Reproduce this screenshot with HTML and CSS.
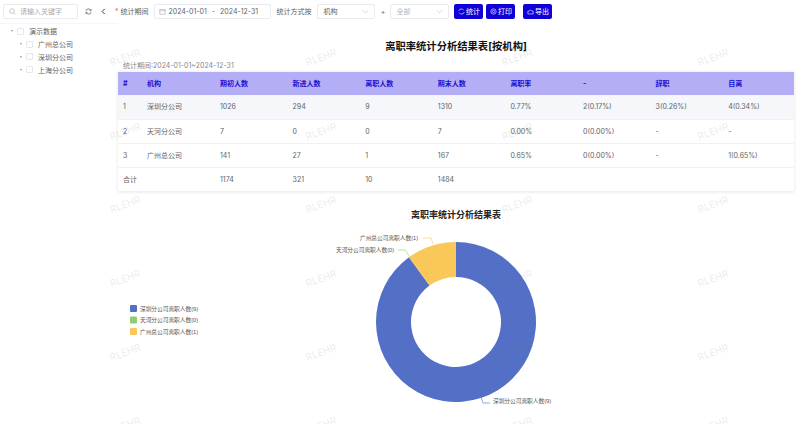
FILE: index.html
```html
<!DOCTYPE html>
<html lang="zh">
<head>
<meta charset="utf-8">
<title>离职率统计分析结果表</title>
<link rel="stylesheet" href="styles.css">
</head>
<body>
<div class="page">
  <div class="toolbar">
    <div class="search">
      <svg class="ico" viewBox="0 0 8 8"><circle cx="3.5" cy="3.5" r="2.7"/><path d="M5.5 5.5 7.3 7.3"/></svg>
      <span>请输入关键字</span>
    </div>
    <svg class="tool refresh" viewBox="0 0 8 8"><path d="M1 3.4A3 3 0 0 1 6.6 2.6M7 4.6A3 3 0 0 1 1.4 5.4"/><path d="M6.9 1.2V3H5.2M1.1 6.8V5H2.8"/></svg>
    <svg class="tool back" viewBox="0 0 8 8"><path d="M5.4 1 2.4 4l3 3"/></svg>
    <label class="lab first"><i>*</i> 统计期间</label>
    <div class="range">
      <svg class="ico" viewBox="0 0 8 8"><rect x="1" y="1.5" width="6" height="5.5"/><path d="M1 3.2h6"/></svg>
      <span>2024-01-01</span><span class="dash">-</span><span>2024-12-31</span>
    </div>
    <label class="lab method">统计方式按</label>
    <div class="select org"><span>机构</span><svg viewBox="0 0 8 8"><path d="M1 2.6 4 5.4l3-2.8"/></svg></div>
    <span class="plus">+</span>
    <div class="select all"><span>全部</span><svg viewBox="0 0 8 8"><path d="M1 2.6 4 5.4l3-2.8"/></svg></div>
    <button class="btn"><svg viewBox="0 0 8 8"><path d="M1 3.4A3 3 0 0 1 6.6 2.6M7 4.6A3 3 0 0 1 1.4 5.4"/></svg>统计</button>
    <button class="btn"><svg viewBox="0 0 8 8"><circle cx="4" cy="4" r="3"/><circle cx="4" cy="4" r="1.2"/></svg>打印</button>
    <button class="btn export"><svg viewBox="0 0 8 8"><path d="M1 6.8V3.6h1.4A1.7 1.7 0 0 1 5.6 3.6H7v3.2z"/></svg>导出</button>
  </div>
  <div class="body">
    <aside class="tree">
      <div class="node root"><b class="caret"></b><u class="check"></u>演示数据</div>
      <div class="node"><b class="caret"></b><u class="check"></u>广州总公司</div>
      <div class="node"><b class="caret"></b><u class="check"></u>深圳分公司</div>
      <div class="node"><b class="caret"></b><u class="check"></u>上海分公司</div>
    </aside>
    <main class="main">
      <h1 class="title">离职率统计分析结果表[按机构]</h1>
      <p class="period">统计期间:2024-01-01~2024-12-31</p>
      <table class="report">
        <colgroup><col class="c-no"><col class="c-org"><col class="c-n"><col class="c-n"><col class="c-n"><col class="c-n"><col class="c-n"><col class="c-n"><col class="c-n"><col></colgroup>
        <thead><tr><th>#</th><th>机构</th><th>期初人数</th><th>新进人数</th><th>离职人数</th><th>期末人数</th><th>离职率</th><th>-</th><th>辞职</th><th>自离</th></tr></thead>
        <tbody>
          <tr class="hl"><td>1</td><td>深圳分公司</td><td>1026</td><td>294</td><td>9</td><td>1310</td><td>0.77%</td><td>2(0.17%)</td><td>3(0.26%)</td><td>4(0.34%)</td></tr>
          <tr><td>2</td><td>天河分公司</td><td>7</td><td>0</td><td>0</td><td>7</td><td>0.00%</td><td>0(0.00%)</td><td>-</td><td>-</td></tr>
          <tr><td>3</td><td>广州总公司</td><td>141</td><td>27</td><td>1</td><td>167</td><td>0.65%</td><td>0(0.00%)</td><td>-</td><td>1(0.65%)</td></tr>
          <tr><td colspan="2">合计</td><td>1174</td><td>321</td><td>10</td><td>1484</td><td></td><td></td><td></td><td></td></tr>
        </tbody>
      </table>
      <svg class="chart" viewBox="0 0 682 233" width="682" height="233">
        <text class="chart-title" x="338" y="25.500" text-anchor="middle">离职率统计分析结果表</text>
        <g transform="translate(338 130)">
          <path fill="#5470c6" d="M0-80A80 80 0 1 1-47.02-64.72L-26.45-36.41A45 45 0 1 0 0-45Z"/>
          <path fill="#fac858" d="M-47.02-64.72A80 80 0 0 1 0-80L0-45A45 45 0 0 0-26.45-36.41Z"/>
        </g>
        <path class="lead y" d="M305 46h8l2 6"/>
        <path class="lead g" d="M280 58h7l5 7"/>
        <path class="lead b" d="M362 202l3 9h7"/>
        <text class="lbl" x="242" y="48">广州总公司离职人数(1)</text>
        <text class="lbl" x="218" y="60">天河分公司离职人数(0)</text>
        <text class="lbl" x="375" y="211">深圳分公司离职人数(9)</text>
        <rect x="12" y="113" width="7" height="7" rx="1" fill="#5470c6"/>
        <rect x="12" y="124.500" width="7" height="7" rx="1" fill="#91cc75"/>
        <rect x="12" y="136" width="7" height="7" rx="1" fill="#fac858"/>
        <text class="lbl" x="22" y="118.500">深圳分公司离职人数(9)</text>
        <text class="lbl" x="22" y="130">天河分公司离职人数(0)</text>
        <text class="lbl" x="22" y="141.500">广州总公司离职人数(1)</text>
      </svg>
    </main>
  </div>
  <div class="marks">
    <span>RLEHR</span><span>RLEHR</span><span>RLEHR</span><span>RLEHR</span>
    <span>RLEHR</span><span>RLEHR</span><span>RLEHR</span><span>RLEHR</span>
    <span>RLEHR</span><span>RLEHR</span><span>RLEHR</span><span>RLEHR</span>
    <span>RLEHR</span><span>RLEHR</span><span>RLEHR</span><span>RLEHR</span>
    <span>RLEHR</span><span>RLEHR</span><span>RLEHR</span><span>RLEHR</span>
    <span>RLEHR</span><span>RLEHR</span><span>RLEHR</span><span>RLEHR</span>
  </div>
</div>
</body>
</html>
```
FILE: styles.css
```css
* { box-sizing: border-box; }
html, body { margin: 0; height: 100%; background: #fff; overflow: hidden; }
body { font-family: Inter, "Noto Sans CJK SC", sans-serif; font-size: 7px; color: #606266; }
.page { position: relative; width: 800px; height: 424px; overflow: hidden; }

.toolbar { display: flex; align-items: center; height: 23px; padding: 0 0 1px 3px; white-space: nowrap; }
.search { display: flex; align-items: center; gap: 4px; width: 75px; height: 15px; padding: 0 5px; border: 1px solid #e9ebf0; border-radius: 2px; color: #a8abb2; }
.ico { width: 7px; height: 7px; fill: none; stroke: #a8abb2; stroke-width: .7; flex: none; }
.tool { width: 7px; height: 7px; fill: none; stroke: #555; stroke-width: .8; flex: none; }
.refresh { margin-left: 7px; }
.back { margin-left: 8px; stroke: #222; stroke-width: 1; }
.lab { color: #606266; white-space: nowrap; }
.lab i { color: #f56c6c; font-style: normal; }
.first { margin-left: 8px; }
.range { display: flex; align-items: center; width: 117px; height: 15px; margin-left: 6px; padding: 0 4px; border: 1px solid #e9ebf0; border-radius: 2px; font-size: 7px; color: #606266; }
.range .ico { margin-right: 2px; }
.dash { margin: 0 5px; }
.method { margin-left: 5px; }
.select { display: flex; align-items: center; justify-content: space-between; width: 58px; height: 15px; padding: 0 5px; border: 1px solid #e9ebf0; border-radius: 2px; }
.select svg { width: 7px; height: 7px; fill: none; stroke: #b4b7bd; stroke-width: .6; }
.org { margin-left: 6px; }
.all { width: 59px; color: #b4b7bd; }
.plus { width: 15px; text-align: center; }
.btn { display: flex; align-items: center; justify-content: center; gap: 1px; width: 29px; height: 15px; margin-left: 3px; padding: 0; border: 0; border-radius: 2px; background: #1000d8; color: #fff; font: inherit; }
.all + .btn { margin-left: 5px; }
.btn svg { width: 7px; height: 7px; fill: none; stroke: #fff; stroke-width: .7; }
.btn.export { margin-left: 8px; }

.body { display: flex; }
.tree { width: 118px; padding-top: 1px; color: #606266; border-top: 1px solid #f6f6f8; align-self: flex-start; }
.node { display: flex; align-items: center; height: 12.800px; padding-left: 20px; }
.node.root { padding-left: 11px; }
.caret { width: 0; height: 0; margin-right: 4px; border: 1.500px solid transparent; border-top: 2px solid #999; border-bottom: 0; }
.check { width: 7px; height: 7px; margin-right: 5px; border: 1px solid #e4e7ed; border-radius: 1px; }

.main { flex: 1; min-width: 0; padding-right: 6px; }
.title { margin: 0; height: 37px; padding-top: 15px; font-size: 10.300px; line-height: 16px; font-weight: 700; color: #111; text-align: center; }
.period { margin: 0 0 0 5px; height: 12px; font-size: 7px; line-height: 12px; color: #888; }
.report { width: 676px; border-collapse: collapse; table-layout: fixed; box-shadow: 0 0 3px rgba(0,0,0,.12); }
.c-no { width: 24px; }
.c-org { width: 73px; }
.c-n { width: 72.600px; }
.report th, .report td { padding: 1px 5px 0; text-align: left; line-height: 10px; }
.report th { height: 23px; background: #b3aef5; color: #1a0fd0; font-weight: 700; }
.report td { height: 24px; border-bottom: 1px solid #f0f1f4; }
.report .hl td { background: #f5f7fa; }
.chart { display: block; }
.chart-title { font-size: 9px; font-weight: 700; fill: #222; }
.lbl { font-family: "Liberation Sans", "Noto Sans CJK SC", sans-serif; font-size: 5.700px; fill: #555; }
.lead { fill: none; stroke-width: .6; }
.lead.y { stroke: #fac858; }
.lead.g { stroke: #91cc75; }
.lead.b { stroke: #5470c6; }

.marks { position: absolute; left: 105px; top: 50px; display: grid; grid-template-columns: repeat(4, 196px); grid-auto-rows: 73.700px; pointer-events: none; }
.marks span { width: 40px; height: 14px; line-height: 14px; text-align: center; font-size: 10px; color: rgba(120,120,120,.16); transform: rotate(-20deg); }
```
